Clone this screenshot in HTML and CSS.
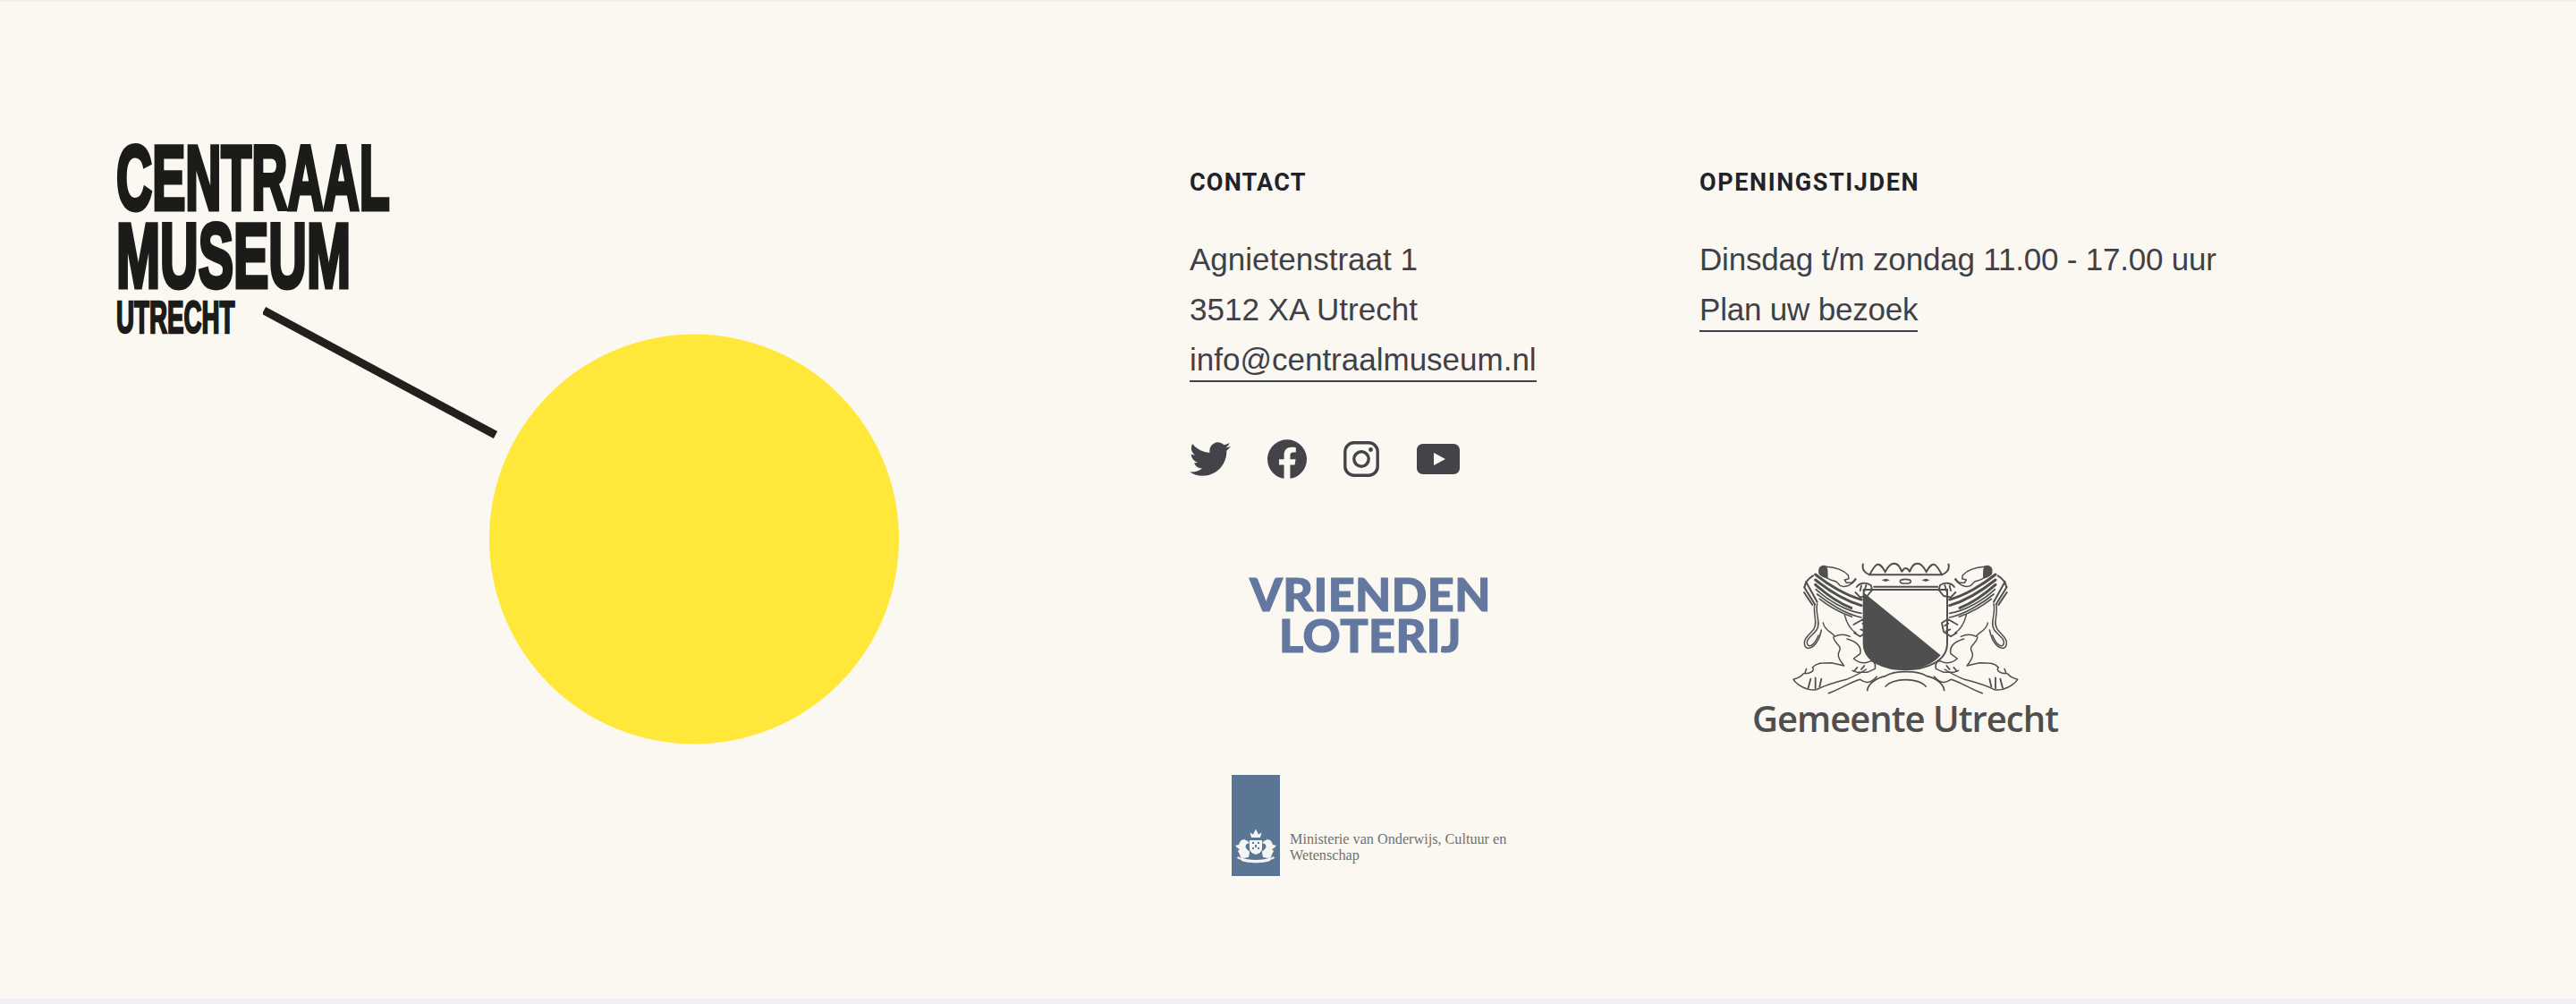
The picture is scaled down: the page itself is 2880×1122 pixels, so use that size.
FILE: index.html
```html
<!DOCTYPE html>
<html lang="nl">
<head>
<meta charset="utf-8">
<title>Centraal Museum Utrecht</title>
<link rel="stylesheet" href="styles.css">
</head>
<body>
<footer class="footer">
  <div class="brand">
    <div class="wordmark">
      <span class="wm wm-centraal">CENTRAAL</span>
      <span class="wm wm-museum">MUSEUM</span>
      <span class="wm wm-utrecht">UTRECHT</span>
    </div>
    <svg class="mark" width="720" height="500" viewBox="0 0 720 500" aria-hidden="true">
      <path d="M1 4 L260 143" stroke="#231f1c" stroke-width="9" fill="none"/>
      <circle cx="482" cy="259.500" r="229" fill="#ffe839"/>
    </svg>
  </div>
  <div class="info">
    <section class="col">
      <h3 class="col-title">Contact</h3>
      <p class="line">Agnietenstraat 1</p>
      <p class="line">3512 XA Utrecht</p>
      <p class="line"><a class="link" href="#">info@centraalmuseum.nl</a></p>
      <div class="social">
        <svg class="ico ico-tw" viewBox="0 0 24 24"><path d="M23.953 4.57a10 10 0 01-2.825.775 4.958 4.958 0 002.163-2.723c-.951.555-2.005.959-3.127 1.184a4.92 4.92 0 00-8.384 4.482C7.69 8.095 4.067 6.13 1.64 3.162a4.822 4.822 0 00-.666 2.475c0 1.71.87 3.213 2.188 4.096a4.904 4.904 0 01-2.228-.616v.06a4.923 4.923 0 003.946 4.827 4.996 4.996 0 01-2.212.085 4.936 4.936 0 004.604 3.417 9.867 9.867 0 01-6.102 2.105c-.39 0-.779-.023-1.17-.067a13.995 13.995 0 007.557 2.209c9.053 0 13.998-7.496 13.998-13.985 0-.21 0-.42-.015-.63A9.935 9.935 0 0024 4.59z"/></svg>
        <svg class="ico ico-fb" viewBox="0 0 24 24"><path d="M24 12.073c0-6.627-5.373-12-12-12s-12 5.373-12 12c0 5.99 4.388 10.954 10.125 11.854v-8.385H7.078v-3.47h3.047V9.43c0-3.007 1.792-4.669 4.533-4.669 1.312 0 2.686.235 2.686.235v2.953H15.83c-1.491 0-1.956.925-1.956 1.874v2.25h3.328l-.532 3.47h-2.796v8.385C19.612 23.027 24 18.062 24 12.073z"/></svg>
        <svg class="ico ico-ig" viewBox="0 0 40 40"><rect x="1.8" y="1.8" width="36.4" height="36.4" rx="10" fill="none" stroke="#43444a" stroke-width="3.4"/><circle cx="20" cy="20" r="8.2" fill="none" stroke="#43444a" stroke-width="3.4"/><circle cx="30.5" cy="9.5" r="2.4"/></svg>
        <svg class="ico ico-yt" viewBox="0 0 48 34"><path fill-rule="evenodd" d="M7 0H41C45 0 48 3 48 7V27C48 31 45 34 41 34H7C3 34 0 31 0 27V7C0 3 3 0 7 0ZM19 10V24L32 17Z"/></svg>
      </div>
    </section>
    <section class="col col-hours">
      <h3 class="col-title">Openingstijden</h3>
      <p class="line">Dinsdag t/m zondag 11.00 - 17.00 uur</p>
      <p class="line"><a class="link" href="#">Plan uw bezoek</a></p>
    </section>
    <div class="logo-vl">
      <span class="vl-a">VRIENDEN</span>
      <span class="vl-b">LOTERIJ</span>
    </div>
    <div class="logo-gu">
      <svg class="crest" width="390" height="170" viewBox="0 0 1170 510" aria-hidden="true">
        <defs>
          <g id="lion" transform="translate(210 45)" fill="none" stroke="#4f4f4f" stroke-width="4.500" stroke-linecap="round" stroke-linejoin="round">
            <path fill="#4f4f4f" d="M100 52C94 32 108 20 122 28C128 42 124 54 126 66C114 62 104 58 100 52Z"/>
            <path d="M122 28C150 30 180 40 196 56L198 68L184 72L190 82L206 82C214 78 216 72 220 68M156 78L170 92C184 98 206 92 222 70M126 66C136 74 146 74 156 78"/>
            <path stroke-width="9" d="M86 54C128 88 188 124 240 138M86 72C126 104 186 142 240 158M86 88C122 120 170 152 206 166"/>
            <path stroke-width="5" d="M88 104C124 138 186 176 240 184M92 120C128 150 190 188 240 198M100 136C130 160 170 182 208 196"/>
            <path stroke-width="6" d="M78 58C62 68 52 82 50 94M54 78L92 146M48 96L84 154M48 114L76 156"/>
            <path d="M92 152C84 190 106 214 90 240C76 260 50 270 60 290C70 300 86 284 96 258"/>
            <path d="M84 152C76 190 96 214 80 238C66 256 40 272 52 296C66 312 96 290 106 240"/>
            <path d="M112 216C116 244 148 250 150 262C166 254 186 254 202 262"/>
            <path d="M184 190C192 222 206 240 222 250"/>
            <path stroke-width="5.500" d="M224 96C236 80 256 80 272 90L276 106L260 126L236 130L220 114M240 92L236 108M256 90L250 110"/>
            <path stroke-width="5.500" d="M214 222L246 204L266 216L260 246L236 262L216 250M244 218L256 226M238 238L252 244"/>
            <path d="M146 264C150 288 176 290 166 312C156 326 170 346 182 360L140 350C110 350 90 350 76 366C86 376 70 386 50 386L56 370M46 386C40 396 26 402 12 406C26 426 60 446 90 440C116 426 150 416 190 406C214 396 236 386 256 372"/>
            <path d="M192 270C226 280 242 296 236 320L214 336C226 346 246 356 266 346C280 340 290 352 286 370L260 382L226 382L210 376"/>
            <path stroke-width="5.500" d="M70 404L62 434M86 400L86 436M106 404L100 430M216 378L226 366M240 372L250 360"/>
            <path d="M130 452C166 440 200 416 236 406C250 416 268 424 292 396"/>
          </g>
        </defs>
        <use href="#lion"/>
        <use href="#lion" transform="matrix(-1 0 0 1 1196 0)"/>
        <g fill="none" stroke="#4f4f4f" stroke-width="5">
          <path stroke-width="6" d="M458 150H738V330C738 392 665 418 598 418C530 418 458 392 458 330Z"/>
          <path stroke-width="6" d="M475 100H722M490 140H708"/>
          <path stroke-width="6" d="M456 62C450 82 464 96 478 100M742 62C748 82 734 96 720 100M478 100C486 84 492 72 502 66C514 62 522 76 530 90C538 74 546 62 560 62C574 62 580 76 586 90M612 90C618 76 624 62 638 62C652 62 660 74 668 90C676 76 684 62 696 66C706 72 712 84 720 100M586 90C594 74 604 74 612 90"/>
          <ellipse cx="598" cy="122" rx="18" ry="7"/>
          <path d="M470 490C470 466 500 446 530 440C560 420 640 420 670 440C700 446 728 466 728 490M530 476C550 444 646 444 668 476"/>
        </g>
        <path fill="#4f4f4f" d="M458 160L716 370C690 402 640 418 598 418C530 418 458 392 458 330Z"/>
        <path fill="#4f4f4f" d="M518 118l14-5 14 5-14 5zM652 118l14-5 14 5-14 5z"/>
      </svg>
      <span class="gu-name">Gemeente Utrecht</span>
    </div>
    <div class="logo-ocw">
      <div class="ocw-bar">
        <svg class="ocw-arms" width="54" height="50" viewBox="0 0 54 50" aria-hidden="true">
          <defs>
            <g id="ocw-lion" fill="#f4f5f2">
              <path d="M4 25l4-1c1-4 3-6 6-6l4 2 2 2-3 1c-2 2-2 4 0 6l3 4-1 5-6 1-3-1-1-3-2-4 2-2-2-1z"/>
              <path d="M17 30l3 1-1 2-3-1zM7 37l5 3-2 1-4-2z"/>
            </g>
          </defs>
          <path fill="#f4f5f2" d="M22 16L20.500 10.500 24 12.500 27 6.500 30 12.500 33.500 10.500 32 16z"/>
          <path fill="#f4f5f2" d="M20 19H34V28C34 32 30 34 27 35C24 34 20 32 20 28z"/>
          <path fill="#5a7694" d="M23 21h2v2h-2zM29 21h2v2h-2zM26 24h2v3h-2zM23 27h2v2h-2zM29 27h2v2h-2z"/>
          <use href="#ocw-lion"/>
          <use href="#ocw-lion" transform="matrix(-1 0 0 1 54 0)"/>
          <path fill="#f4f5f2" d="M10 38C18 42 36 42 44 38L43 42C36 45 18 45 11 42z"/>
        </svg>
      </div>
      <p class="ocw-name">Ministerie van Onderwijs, Cultuur en Wetenschap</p>
    </div>
  </div>
</footer>
</body>
</html>
```
FILE: styles.css
```css
html, body { margin: 0; padding: 0; }
body {
  background: #eff0f3;
  height: 1122px;
  overflow: hidden;
  font-family: "Liberation Sans", Arial, sans-serif;
}
.footer {
  box-sizing: border-box;
  height: 1114px;
  margin-top: 2px;
  background: #fbf8f1;
  display: flex;
  padding: 0 0 0 130px;
}
.brand {
  flex: 0 0 1200px;
  display: grid;
  grid-template-columns: 1fr;
  align-content: start;
  padding-top: 154px;
}
.wordmark, .mark { grid-area: 1 / 1; }
.mark { margin: 187px 0 0 164px; }
.wordmark { display: flex; flex-direction: column; align-items: flex-start; }
.wm {
  display: block;
  font-family: "Liberation Sans", sans-serif;
  font-weight: 700;
  color: #1b1c19;
  white-space: nowrap;
  transform-origin: left top;
  -webkit-text-stroke: 5px #1b1c19;
}
.wm-centraal { font-size: 102px; line-height: 87px; transform: scaleX(.545); }
.wm-museum { font-size: 102px; line-height: 87px; transform: scaleX(.578); }
.wm-utrecht { font-size: 50px; line-height: 50px; -webkit-text-stroke-width: 2.5px; transform: scaleX(.555); }

.info {
  flex: 1;
  display: grid;
  grid-template-columns: 570px 1fr;
  grid-template-rows: 460px 218px auto;
  padding-top: 186px;
  box-sizing: border-box;
  align-content: start;
}
.col-title {
  margin: 0 0 42px;
  font-family: Roboto, "Liberation Sans", sans-serif;
  font-size: 27px;
  line-height: 32px;
  font-weight: 700;
  letter-spacing: 1.2px;
  text-transform: uppercase;
  color: #22232a;
}
.col-hours .col-title { letter-spacing: 1.6px; }
.col-hours .line { letter-spacing: -.2px; }
.line {
  margin: 0;
  font-size: 35px;
  line-height: 56px;
  color: #3f4048;
  white-space: nowrap;
}
.link {
  color: inherit;
  text-decoration: none;
  display: inline-block;
  line-height: 46px;
  border-bottom: 2px solid #3f4048;
}
.social {
  display: flex;
  align-items: center;
  margin-top: 61px;
  height: 44px;
}
.ico { display: block; fill: #43444a; flex: none; }
.ico-tw { width: 46px; height: 46px; margin-right: 41px; }
.ico-fb { width: 44px; height: 44px; margin-right: 41px; }
.ico-ig { width: 40px; height: 40px; margin-right: 42px; }
.ico-yt { width: 48px; height: 34px; }

.logo-vl {
  display: flex;
  flex-direction: column;
  align-items: center;
  width: 404px;
  margin-top: -8px;
  align-self: start;
  font-family: Lato, "Liberation Sans", sans-serif;
  font-weight: 900;
  color: #64789f;
  -webkit-text-stroke: 1.2px #64789f;
}
.vl-a, .vl-b { font-size: 52px; line-height: 46px; letter-spacing: .5px; }
.logo-gu {
  display: flex;
  flex-direction: column;
  align-items: center;
  width: 460px;
  margin: -39px 0 0 0;
  align-self: start;
}
.crest { display: block; margin-left: -9px; }
.gu-name {
  margin-top: 2px;
  font-family: "Open Sans", sans-serif;
  font-weight: 600;
  font-size: 40px;
  letter-spacing: -1px;
  line-height: 44px;
  color: #4f4f4f;
  white-space: nowrap;
}
.logo-ocw {
  display: flex;
  align-items: flex-end;
  margin-left: 47px;
  grid-column: 1;
}
.ocw-bar {
  flex: none;
  width: 54px;
  height: 113px;
  background: #5a7694;
  display: flex;
  align-items: flex-end;
  justify-content: center;
  padding-bottom: 9px;
  box-sizing: border-box;
}
.ocw-arms { display: block; }
.ocw-name {
  margin: 0 0 14px 11px;
  width: 270px;
  font-family: "Liberation Serif", serif;
  font-size: 16.2px;
  line-height: 18px;
  color: #707070;
}
```
